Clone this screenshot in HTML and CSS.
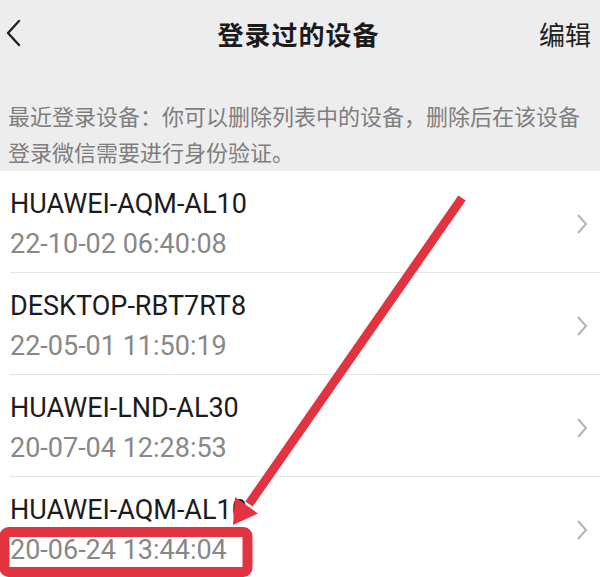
FILE: index.html
```html
<!DOCTYPE html>
<html lang="zh-CN">
<head>
<meta charset="utf-8">
<title>登录过的设备</title>
<link rel="stylesheet" href="styles.css">
</head>
<body>
<div class="page">
  <header class="topbar">
    <span class="back">
      <svg width="16" height="28" viewBox="0 0 16 28"><polyline points="13,2 2,14 13,26" fill="none" stroke="#222" stroke-width="2.4" stroke-linecap="round" stroke-linejoin="round"/></svg>
    </span>
    <h1 class="title">登录过的设备</h1>
    <span class="edit">编辑</span>
  </header>
  <p class="desc">最近登录设备：你可以删除列表中的设备，删除后在该设备登录微信需要进行身份验证。</p>
  <ul class="list">
    <li class="row">
      <div class="info"><div class="name">HUAWEI-AQM-AL10</div><div class="time">22-10-02 06:40:08</div></div>
      <svg class="chev" width="12" height="24" viewBox="0 0 12 24"><polyline points="2,3 10,12 2,21" fill="none" stroke="#b3b3b3" stroke-width="2"/></svg>
    </li>
    <li class="row">
      <div class="info"><div class="name">DESKTOP-RBT7RT8</div><div class="time">22-05-01 11:50:19</div></div>
      <svg class="chev" width="12" height="24" viewBox="0 0 12 24"><polyline points="2,3 10,12 2,21" fill="none" stroke="#b3b3b3" stroke-width="2"/></svg>
    </li>
    <li class="row">
      <div class="info"><div class="name">HUAWEI-LND-AL30</div><div class="time">20-07-04 12:28:53</div></div>
      <svg class="chev" width="12" height="24" viewBox="0 0 12 24"><polyline points="2,3 10,12 2,21" fill="none" stroke="#b3b3b3" stroke-width="2"/></svg>
    </li>
    <li class="row">
      <div class="info"><div class="name">HUAWEI-AQM-AL10</div><div class="time">20-06-24 13:44:04</div></div>
      <svg class="chev" width="12" height="24" viewBox="0 0 12 24"><polyline points="2,3 10,12 2,21" fill="none" stroke="#b3b3b3" stroke-width="2"/></svg>
    </li>
  </ul>
  <svg class="annot" width="600" height="577" viewBox="0 0 600 577">
    <line x1="462" y1="198" x2="249" y2="504" stroke="#e23340" stroke-width="9"/>
    <polygon points="233,525 258,513.5 235,497" fill="#e23340"/>
    <rect x="4.5" y="532" width="243" height="40" rx="4" fill="none" stroke="#e23340" stroke-width="10"/>
  </svg>
</div>
</body>
</html>
```

FILE: styles.css
```css
* { box-sizing: border-box; }
html, body { margin: 0; padding: 0; }
body {
  background: #fff;
  font-family: Roboto, "Noto Sans CJK SC", sans-serif;
  overflow: hidden;
}
.page {
  position: relative;
  width: 600px;
  height: 577px;
  overflow: hidden;
  background: #fff;
}
.topbar {
  height: 68px;
  background: #ededed;
  display: flex;
  align-items: center;
  justify-content: space-between;
  padding: 0 9px 2px 6px;
  position: relative;
}
.back { display: flex; align-items: center; width: 60px; }
.title {
  margin: 0;
  font-family: "Noto Sans CJK SC", sans-serif;
  font-size: 26px;
  font-weight: 700;
  color: #1b1b1b;
  flex: 1;
  text-align: center;
  letter-spacing: 1px;
}
.edit {
  width: 60px;
  text-align: right;
  font-family: "Noto Sans CJK SC", sans-serif;
  font-size: 26px;
  color: #222;
}
.desc {
  margin: 0;
  background: #ededed;
  padding: 29px 8px 2px 8px;
  font-family: "Noto Sans CJK SC", sans-serif;
  font-size: 22px;
  line-height: 36px;
  color: #7e7e7e;
  height: 103px;
}
.list { list-style: none; margin: 0; padding: 0; }
.row {
  display: flex;
  align-items: center;
  justify-content: space-between;
  height: 102px;
  margin-left: 10px;
  padding: 5px 12px 0 0;
  border-bottom: 1px solid #e6e6e6;
}
.info { display: flex; flex-direction: column; }
.name {
  font-size: 27px;
  line-height: 40px;
  color: #1c1c1c;
}
.time {
  font-size: 27px;
  line-height: 40px;
  color: #888;
}
.chev { display: block; }
.annot {
  position: absolute;
  left: 0;
  top: 0;
  pointer-events: none;
}
```
